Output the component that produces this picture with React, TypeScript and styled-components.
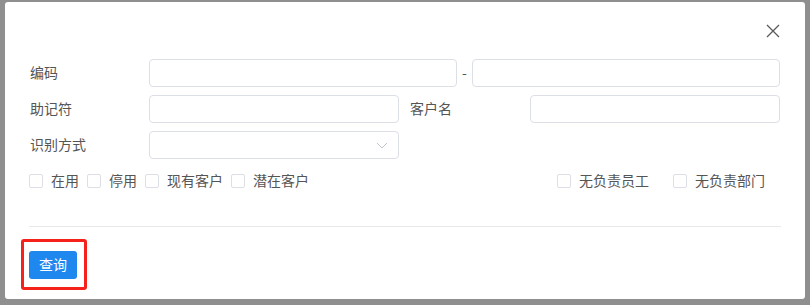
import React from "react";
import styled, { createGlobalStyle } from "styled-components";

const Global = createGlobalStyle`
  html, body { margin: 0; padding: 0; }
  body {
    font-family: "Noto Sans CJK SC", "Noto Sans", sans-serif;
    font-size: 14px;
    color: #555;
  }
`;

const Backdrop = styled.div`
  width: 810px;
  height: 305px;
  background: #8f8f8f;
  padding: 2px 0 0 5px;
  box-sizing: border-box;
  overflow: hidden;
`;

const Dialog = styled.div`
  width: 800px;
  height: 297px;
  background: #fff;
  border-radius: 3px;
  display: flex;
  flex-direction: column;
`;

const Header = styled.div`
  height: 57px;
  display: flex;
  justify-content: flex-end;
  align-items: flex-start;
  padding: 22px 25px 0 0;
  box-sizing: border-box;
`;

const Close = styled.button`
  width: 14px;
  height: 14px;
  padding: 0;
  border: none;
  background: none;
  display: flex;
  cursor: pointer;
`;

const Form = styled.div`
  padding: 0 25px;
  display: flex;
  flex-direction: column;
  gap: 8px;
`;

const Row = styled.div`
  display: flex;
  align-items: center;
  height: 28px;
`;

const Label = styled.div<{ $w: number; $pl?: number }>`
  width: ${(p) => p.$w}px;
  padding-left: ${(p) => p.$pl ?? 0}px;
  box-sizing: border-box;
  flex-shrink: 0;
  line-height: 26px;
  padding-bottom: 2px;
  color: #555;
`;

const Input = styled.div<{ $w: number }>`
  width: ${(p) => p.$w}px;
  height: 28px;
  box-sizing: border-box;
  border: 1px solid #dcdfe6;
  border-radius: 4px;
  background: #fff;
  flex-shrink: 0;
  display: flex;
  align-items: center;
  justify-content: flex-end;
  padding-right: 10px;
`;

const Dash = styled.div`
  width: 15px;
  text-align: center;
  color: #555;
  line-height: 26px;
  padding-bottom: 2px;
`;

const CheckRow = styled.div`
  display: flex;
  align-items: center;
  height: 20px;
  margin-top: 3px;
  padding-right: 15px;
`;

const CheckGroup = styled.div<{ $gap: number; $right?: boolean }>`
  display: flex;
  align-items: center;
  gap: ${(p) => p.$gap}px;
  margin-left: ${(p) => (p.$right ? "auto" : "-1px")};
`;

const CheckItem = styled.label`
  display: flex;
  align-items: center;
  gap: 8px;
  color: #555;
  line-height: 20px;
  white-space: nowrap;
`;

const Box = styled.span`
  width: 14px;
  height: 14px;
  box-sizing: border-box;
  border: 1px solid #dcdfe6;
  border-radius: 2px;
  background: #fff;
  margin-top: 1px;
`;

const Divider = styled.div`
  height: 1px;
  background: #e9e9e9;
  margin: 36px 24px 0 24px;
`;

const Footer = styled.div`
  padding: 12px 0 0 16px;
  display: flex;
`;

const Highlight = styled.div`
  border: 3px solid #f5221b;
  border-radius: 3px;
  padding: 9px 7px 8px 5px;
  display: flex;
`;

const PrimaryButton = styled.button`
  width: 48px;
  height: 28px;
  border: none;
  border-radius: 3px;
  background: #1f88ef;
  color: #fff;
  font-family: "Noto Sans CJK SC", "Noto Sans", sans-serif;
  font-size: 14px;
  line-height: 26px;
  padding: 0 0 2px;
  cursor: pointer;
`;

const Check = ({ text }: { text: string }) => (
  <CheckItem>
    <Box />
    {text}
  </CheckItem>
);

export default function App() {
  return (
    <>
      <Global />
      <Backdrop>
        <Dialog>
          <Header>
            <Close aria-label="close">
              <svg width="14" height="14" viewBox="0 0 14 14">
                <path d="M1 1 L13 13 M13 1 L1 13" stroke="#5a5a5a" strokeWidth="1.3" fill="none" />
              </svg>
            </Close>
          </Header>
          <Form>
            <Row>
              <Label $w={119}>编码</Label>
              <Input $w={308} />
              <Dash>-</Dash>
              <Input $w={308} />
            </Row>
            <Row>
              <Label $w={119}>助记符</Label>
              <Input $w={250} />
              <Label $w={131} $pl={11}>客户名</Label>
              <Input $w={250} />
            </Row>
            <Row>
              <Label $w={119}>识别方式</Label>
              <Input $w={250}>
                <svg width="12" height="7" viewBox="0 0 12 7">
                  <path d="M1 1 L6 6 L11 1" stroke="#c0c4cc" strokeWidth="1" fill="none" />
                </svg>
              </Input>
            </Row>
            <CheckRow>
              <CheckGroup $gap={8}>
                <Check text="在用" />
                <Check text="停用" />
                <Check text="现有客户" />
                <Check text="潜在客户" />
              </CheckGroup>
              <CheckGroup $gap={24} $right>
                <Check text="无负责员工" />
                <Check text="无负责部门" />
              </CheckGroup>
            </CheckRow>
          </Form>
          <Divider />
          <Footer>
            <Highlight>
              <PrimaryButton>查询</PrimaryButton>
            </Highlight>
          </Footer>
        </Dialog>
      </Backdrop>
    </>
  );
}
